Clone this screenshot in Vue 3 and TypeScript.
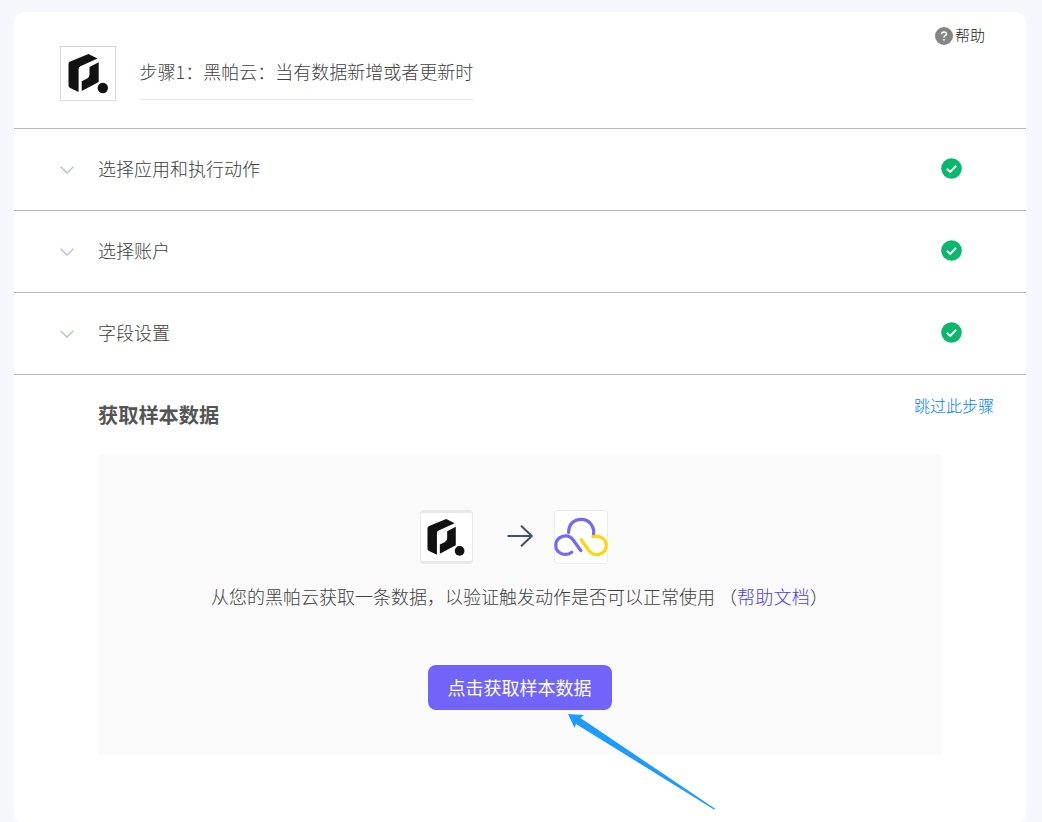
<script setup lang="ts">
interface Step {
  id: number
  title: string
}

const steps: Step[] = [
  { id: 1, title: '选择应用和执行动作' },
  { id: 2, title: '选择账户' },
  { id: 3, title: '字段设置' },
]
</script>

<template>
  <main class="page">
    <section class="card">
      <header class="head">
        <div class="app-icon">
          <svg viewBox="0 0 40 40" width="40" height="40">
            <path d="M0.5 10Q0.5 8.3 2.2 7.4L20.5 0L29.5 4.6L12.4 12.2Q10.6 13 10.6 15V38L2.2 34Q0.5 33.2 0.5 31.6Z" />
            <path d="M30.7 8.2V28L13.7 37V27.2L19.2 24.4Q21.5 23 21.5 20.6V13Z" />
            <circle cx="34.8" cy="34" r="5.2" />
          </svg>
        </div>
        <h1 class="head-title">步骤1：黑帕云：当有数据新增或者更新时</h1>
        <a class="help">
          <svg viewBox="0 0 18 18" width="18" height="18">
            <circle cx="9" cy="9" r="9" fill="#858585" />
            <path d="M6.5 7.2Q6.6 4.9 9 4.9Q11.4 4.9 11.4 6.9Q11.4 8 10.1 8.7Q9 9.3 9 10.6" fill="none" stroke="#fff" stroke-width="1.5" />
            <rect x="8.2" y="12" width="1.6" height="1.6" fill="#fff" />
          </svg>
          <span>帮助</span>
        </a>
      </header>

      <div v-for="step in steps" :key="step.id" class="row">
        <svg class="chevron" viewBox="0 0 14 8" width="14" height="8">
          <path d="M0.6 0.8L7 7L13.4 0.8" />
        </svg>
        <span class="row-title">{{ step.title }}</span>
        <svg class="check" viewBox="0 0 20 20" width="21" height="21">
          <circle cx="10" cy="10" r="9.8" />
          <path d="M5.6 10.3L8.8 13.2L14.4 7.4" />
        </svg>
      </div>

      <div class="sample">
        <div class="sample-head">
          <h2 class="sample-title">获取样本数据</h2>
          <a class="skip">跳过此步骤</a>
        </div>
        <div class="panel">
          <div class="flow">
            <div class="flow-app">
              <svg viewBox="0 0 40 40" width="37.5" height="37.5">
                <path d="M0.5 10Q0.5 8.3 2.2 7.4L20.5 0L29.5 4.6L12.4 12.2Q10.6 13 10.6 15V38L2.2 34Q0.5 33.2 0.5 31.6Z" />
                <path d="M30.7 8.2V28L13.7 37V27.2L19.2 24.4Q21.5 23 21.5 20.6V13Z" />
                <circle cx="34.8" cy="34" r="5.2" />
              </svg>
            </div>
            <svg class="flow-arrow" viewBox="0 0 26 22" width="26" height="22">
              <path d="M1.3 11H24.5M14.6 1.2L24.7 11L14.6 20.8" />
            </svg>
            <div class="flow-cloud">
              <svg viewBox="0 0 54 54" width="54" height="54" fill="none" stroke-width="3.2" stroke-linecap="round">
                <path stroke="#7468fb" d="M14.6 22.5C14.6 14 20 9.4 27.2 9.4C35 9.4 41 16 39.5 25.5" />
                <path stroke="#7468fb" d="M17.8 42.2C10 47.5 1.8 42.2 1.8 35.4C1.8 26.5 13.5 22.2 19.2 30L26.8 40.6" />
                <path stroke="#ffd60a" d="M38.8 26.6C46.2 24.7 52.2 29.4 52.2 35.6C52.2 43.7 41.5 47.8 35.6 41.5L27.2 29.8" />
              </svg>
            </div>
          </div>
          <p class="desc">从您的黑帕云获取一条数据，以验证触发动作是否可以正常使用&nbsp;<span>（</span><a class="doc">帮助文档</a>）</p>
          <div class="action">
            <button class="fetch" type="button">点击获取样本数据</button>
            <svg class="pointer" viewBox="0 0 148 96" width="148" height="96">
              <path d="M0 0L16 1L12.5 4L147.5 95L146 95.5L8 10L6.6 14Z" />
            </svg>
          </div>
        </div>
      </div>
    </section>
  </main>
</template>

<style>
body {
  background: #f5f7fc;
}
</style>

<style scoped>
.page {
  box-sizing: border-box;
  height: 822px;
  padding: 12px 16px 0 14px;
  overflow: hidden;
  background: #f5f7fc;
  font-family: "Noto Sans CJK SC", sans-serif;
  color: #404040;
}
.card {
  height: 812px;
  border-radius: 12px;
  background: #fff;
}
.head {
  display: flex;
  box-sizing: border-box;
  height: 117px;
  padding: 34px 41px 0 46px;
  border-bottom: 1px solid #bbb;
}
.app-icon {
  display: flex;
  box-sizing: border-box;
  width: 56px;
  height: 55px;
  padding: 7px 0 0 7px;
  border: 1px solid #d8d8d8;
  fill: #111;
}
.head-title {
  box-sizing: border-box;
  height: 54px;
  margin: 0 0 0 23.5px;
  padding-top: 12px;
  border-bottom: 1px solid #eaeaea;
  font-size: 18px;
  font-weight: 300;
  line-height: 27px;
  white-space: nowrap;
}
.help {
  display: flex;
  align-items: center;
  gap: 2px;
  height: 20px;
  margin: -20px 0 0 auto;
  color: #222;
  font-size: 15px;
  font-weight: 300;
  line-height: 20px;
}
.help span {
  margin-top: -2px;
}
.row {
  display: flex;
  box-sizing: border-box;
  align-items: center;
  height: 82px;
  padding: 0 64px 0 46px;
  border-bottom: 1px solid #bbb;
}
.chevron {
  fill: none;
  stroke: #b3c0d2;
  stroke-width: 1.3;
}
.row-title {
  margin: -3px 0 0 24px;
  font-size: 18px;
  font-weight: 300;
  line-height: 26px;
}
.check {
  margin: -2px 0 0 auto;
}
.check circle {
  fill: #0bb76c;
}
.check path {
  fill: none;
  stroke: #fff;
  stroke-width: 1.8;
}
.sample {
  padding: 0 84px;
}
.sample-head {
  display: flex;
  justify-content: space-between;
  height: 79px;
  margin-right: -52px;
}
.sample-title {
  margin: 25px 0 0;
  color: #555;
  font-size: 20.2px;
  font-weight: 700;
  line-height: 30px;
}
.skip {
  margin-top: 18px;
  color: #0080ff;
  font-size: 16px;
  font-weight: 300;
  line-height: 24px;
}
.panel {
  display: flex;
  box-sizing: border-box;
  flex-direction: column;
  align-items: center;
  height: 301px;
  padding-top: 56px;
  background: #fafafa;
}
.flow {
  display: flex;
  align-items: center;
  height: 54px;
  margin-left: -12px;
}
.flow-app {
  display: flex;
  box-sizing: border-box;
  width: 53px;
  height: 54px;
  padding: 5.5px 0 0 6px;
  border: 1px solid #e8e8e8;
  border-width: 3px 1px;
  border-radius: 4px;
  background: #fff;
  fill: #111;
}
.flow-arrow {
  margin: -2px 21px 0 34px;
  fill: none;
  stroke: #42526e;
  stroke-width: 2;
  stroke-linecap: round;
}
.flow-cloud {
  display: flex;
  box-sizing: border-box;
  width: 54px;
  height: 54px;
  border: 1px solid #ebebeb;
  border-radius: 4px;
  background: #fff;
}
.flow-cloud svg {
  flex: none;
  margin: -1px;
}
.desc {
  margin: 19px 0 0 -1px;
  font-size: 18px;
  font-weight: 300;
  line-height: 26px;
  white-space: nowrap;
}
.doc {
  letter-spacing: 0.2px;
  color: #4a3cf0;
}
.action {
  position: relative;
  margin-top: 56px;
}
.fetch {
  display: block;
  width: 184px;
  height: 45px;
  padding: 0 1px 0 0;
  border: 0;
  border-radius: 8px;
  background: #7065f8;
  color: #fff;
  font-family: inherit;
  font-size: 18px;
  font-weight: 400;
  line-height: 45px;
}
.pointer {
  position: absolute;
  top: 49px;
  left: 140px;
  fill: #1e9bff;
}
</style>
